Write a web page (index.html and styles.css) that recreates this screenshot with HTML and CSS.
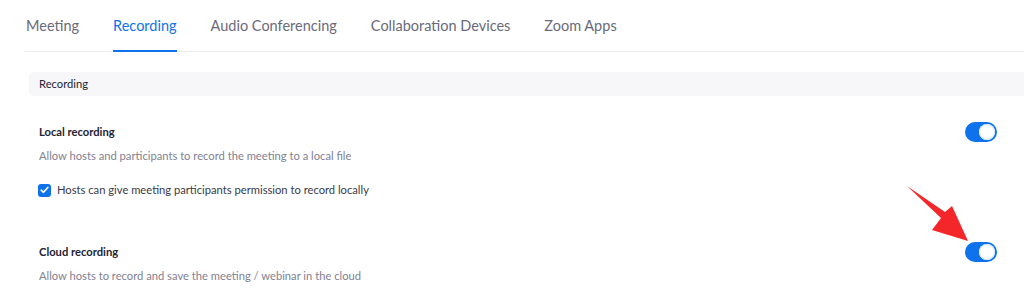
FILE: index.html
```html
<!DOCTYPE html>
<html lang="en">
<head>
  <meta charset="UTF-8">
  <title>Recording Settings</title>
  <link rel="stylesheet" href="styles.css">
</head>
<body>
  <div class="tabs">
    <div class="tab">Meeting</div>
    <div class="tab active">Recording</div>
    <div class="tab">Audio Conferencing</div>
    <div class="tab">Collaboration Devices</div>
    <div class="tab">Zoom Apps</div>
  </div>

  <div class="section-head">Recording</div>

  <div class="setting first">
    <div class="setting-body">
      <div class="setting-title">Local recording</div>
      <div class="setting-desc">Allow hosts and participants to record the meeting to a local file</div>
      <label class="check">
        <span class="check-box">
          <svg width="9" height="8" viewBox="0 0 9 8"><path d="M1.2 4.2 L3.5 6.3 L7.8 1.5" fill="none" stroke="#fff" stroke-width="1.7" stroke-linecap="round" stroke-linejoin="round"/></svg>
        </span>
        Hosts can give meeting participants permission to record locally
      </label>
    </div>
    <div class="toggle on"><span class="knob"></span></div>
  </div>

  <div class="setting second">
    <div class="setting-body">
      <div class="setting-title">Cloud recording</div>
      <div class="setting-desc">Allow hosts to record and save the meeting / webinar in the cloud</div>
    </div>
    <div class="toggle on"><span class="knob"></span></div>
  </div>

  <!-- annotation arrow pointing at the cloud recording toggle -->
  <svg class="arrow" width="70" height="62" viewBox="0 0 70 62">
    <polygon points="0,0 38,26 45,20 61,55 25,44 34,32" fill="#f5262a"/>
  </svg>
</body>
</html>
```

FILE: styles.css
```css
body {
  margin: 0;
  font-family: Lato, "Open Sans", Arial, sans-serif;
  color: #232333;
  background-color: #fff;
  position: relative;
  height: 295px;
  overflow: hidden;
}
.tabs {
  display: flex;
  gap: 34px;
  margin-left: 25px;
  padding-left: 1px;
  height: 51px;
  border-bottom: 1px solid #ededf1;
}
.tab {
  position: relative;
  font-size: 14.5px;
  line-height: 52px;
  height: 52px;
  color: #6a6a7a;
}
.tab.active {
  color: #0e72ed;
}
.tab.active::after {
  content: "";
  position: absolute;
  left: 0;
  right: 0;
  bottom: 0;
  height: 2px;
  background-color: #0e72ed;
}
.section-head {
  margin: 20px 0 0 29px;
  height: 24px;
  line-height: 24px;
  padding-left: 10px;
  font-size: 11.2px;
  background-color: #f7f7fa;
  border-radius: 5px 0 0 5px;
}
.setting {
  display: flex;
  justify-content: space-between;
  align-items: flex-start;
  padding: 0 27px 0 39px;
}
.setting.first {
  margin-top: 26px;
}
.setting.second {
  margin-top: 42px;
}
.setting-title {
  font-size: 11.2px;
  font-weight: bold;
  line-height: 20px;
}
.setting-desc {
  margin-top: 4px;
  font-size: 11.2px;
  line-height: 20px;
  color: #818191;
}
.check {
  display: flex;
  align-items: center;
  gap: 6px;
  margin-top: 14px;
  font-size: 11.2px;
  line-height: 20px;
  color: #39394a;
}
.check-box {
  display: flex;
  align-items: center;
  justify-content: center;
  width: 13px;
  height: 13px;
  margin-left: -1px;
  border-radius: 3px;
  background-color: #0e72ed;
}
.toggle {
  position: relative;
  width: 32px;
  height: 20px;
  border-radius: 10px;
  background-color: #0e72ed;
}
.knob {
  position: absolute;
  top: 2px;
  right: 2px;
  width: 16px;
  height: 16px;
  border-radius: 50%;
  background-color: #fff;
  box-shadow: inset 0 0 0 1px #d6e6fb;
}
.arrow {
  position: absolute;
  left: 907px;
  top: 186px;
}
```
